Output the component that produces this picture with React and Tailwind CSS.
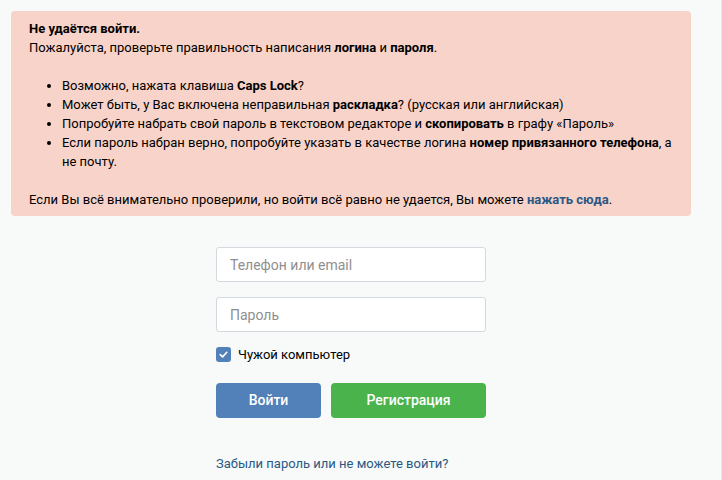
import React, { useState } from 'react';

const App = () => {
  const [foreign, setForeign] = useState(true);

  return (
    <div
      className="w-[722px] h-[480px] overflow-hidden bg-[#f7faf8] border-r border-[#e3e7e5] text-[13px] leading-[19px] text-black"
      style={{ fontFamily: 'Roboto, "Liberation Sans", sans-serif' }}
    >
      {/* ошибка входа */}
      <div className="ml-[11px] mt-[11px] w-[680px] rounded-[4px] bg-[#f8d3c9] pl-[18px] pr-[16px] pt-[8px] pb-[7px]">
        <div className="font-bold">Не удаётся войти.</div>
        <div>
          Пожалуйста, проверьте правильность написания <b>логина</b> и <b>пароля</b>.
        </div>
        <ul className="list-disc pl-[33px] my-[19px]">
          <li>Возможно, нажата клавиша <b>Caps Lock</b>?</li>
          <li>
            Может быть, у Вас включена неправильная <b>раскладка</b>? (русская или английская)
          </li>
          <li>
            Попробуйте набрать свой пароль в текстовом редакторе и <b>скопировать</b> в графу «Пароль»
          </li>
          <li>
            Если пароль набран верно, попробуйте указать в качестве логина <b>номер привязанного телефона</b>, а не почту.
          </li>
        </ul>
        <div>
          Если Вы всё внимательно проверили, но войти всё равно не удается, Вы можете{' '}
          <a href="#" className="font-bold text-[#2a5885]">нажать сюда</a>.
        </div>
      </div>

      {/* форма */}
      <div className="ml-[216px] mt-[31px] w-[270px] flex flex-col">
        <input
          type="text"
          placeholder="Телефон или email"
          className="h-[35px] w-full rounded-[3px] border border-[#d3d9de] bg-white px-[13px] text-[14px] placeholder-[#8f8f8f] outline-none"
        />
        <input
          type="password"
          placeholder="Пароль"
          className="mt-[15px] h-[35px] w-full rounded-[3px] border border-[#d3d9de] bg-white px-[13px] text-[14px] placeholder-[#8f8f8f] outline-none"
        />
        <label
          className="mt-[13px] flex items-center gap-[7px] cursor-pointer select-none"
          onClick={() => setForeign(v => !v)}
        >
          <span
            className={`w-[15px] h-[15px] rounded-[3px] flex items-center justify-center ${
              foreign ? 'bg-[#5181b8]' : 'bg-white border border-[#c1c9d1]'
            }`}
          >
            {foreign && (
              <svg width="11" height="11" viewBox="0 0 12 12" fill="none">
                <path d="M2.5 6.2 L5 8.6 L9.6 3.6" stroke="white" strokeWidth="1.8" strokeLinecap="round" strokeLinejoin="round" />
              </svg>
            )}
          </span>
          <span>Чужой компьютер</span>
        </label>
        <div className="mt-[19px] flex gap-[10px]">
          <button className="h-[35px] w-[105px] rounded-[4px] bg-[#5181b8] text-white text-[14px] font-medium">
            Войти
          </button>
          <button className="h-[35px] w-[155px] rounded-[4px] bg-[#4bb34b] text-white text-[14px] font-medium">
            Регистрация
          </button>
        </div>
        <a href="#" className="mt-[36px] text-[#2a5885]">
          Забыли пароль или не можете войти?
        </a>
      </div>
    </div>
  );
};

export default App;
